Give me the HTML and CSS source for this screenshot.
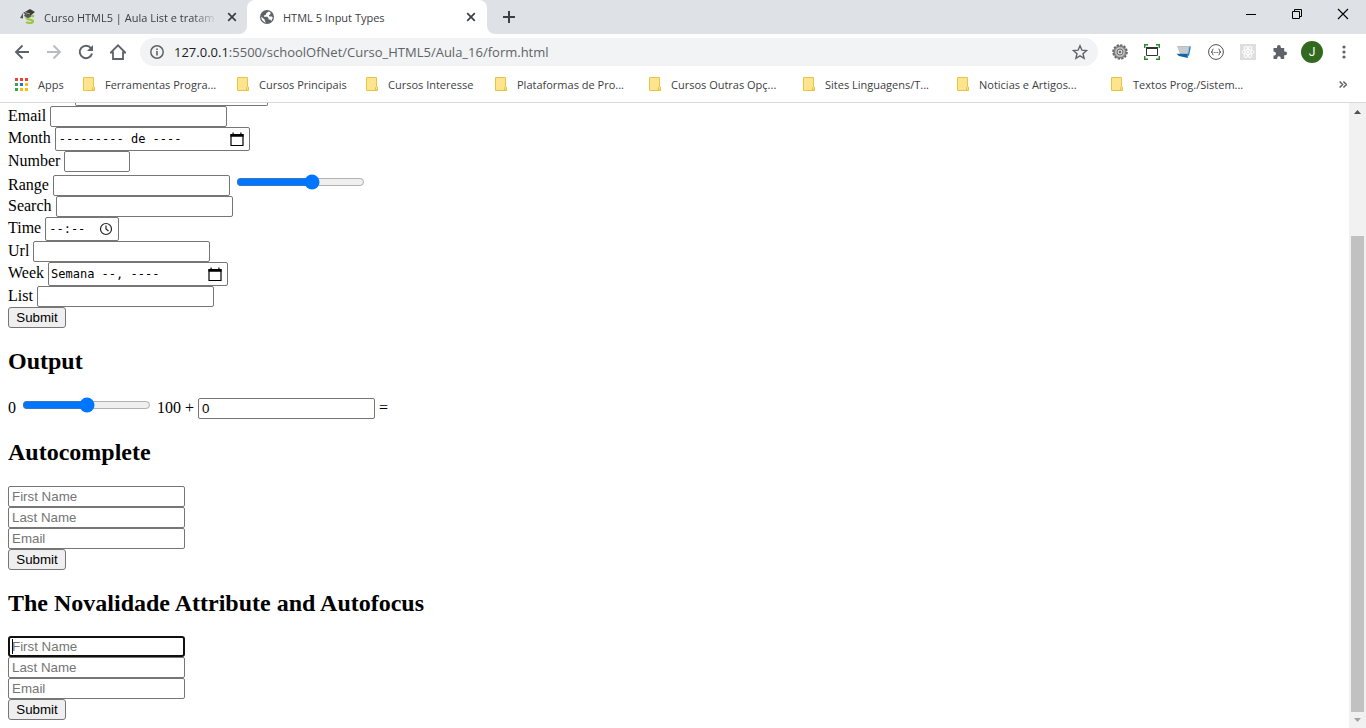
FILE: index.html
```
<!DOCTYPE html>
<html lang="pt-BR">
<head>
<meta charset="utf-8">
<title>HTML 5 Input Types</title>
<link rel="stylesheet" href="styles.css">
</head>
<body>
<svg class="defs" aria-hidden="true">
  <symbol id="folder" viewBox="0 0 12 14"><path d="M.5.5h10v9.500h1v3.500H.5z" fill="#ffe48f" stroke="#e9c441"/><path d="M9.500 13v-2.500l1-1 1 1V13z" fill="#ffe48f" stroke="#e9c441"/></symbol>
  <symbol id="close" viewBox="0 0 10 10"><path d="M1.200 1.200l7.600 7.600M8.800 1.200L1.200 8.800" stroke="#3c4043" stroke-width="1.700" fill="none"/></symbol>
  <symbol id="calendar" viewBox="0 0 14 15"><path d="M1 2.500h12v11H1z" fill="none" stroke="#000" stroke-width="1.200"/><path d="M.5 2h13v2.800H.5zM2.500.5h1.200v2H2.500zM10.300.5h1.200v2h-1.200z"/></symbol>
</svg>

<header class="browser">
  <div class="tabs">
    <div class="tab first">
      <svg class="fav" width="16" height="16" viewBox="0 0 16 16"><path d="M14 7.500C11 6 6.500 6.500 6.500 8.800c0 2.400 6.500 1.200 6.500 3.500 0 2-4.500 2.200-7 .8" fill="none" stroke="#9bc53d" stroke-width="2.200"/><path d="M3 4L10 0l5 3-5 4z" fill="#3b3b3b"/><path d="M5 5l5 1 1 2-3 1-4-2zM3 4L0 9l3 .5z" fill="#555"/><path d="M5 3.500l5 1.500" stroke="#aaa"/></svg>
      <span class="title">Curso HTML5 | Aula List e tratam</span>
      <button class="x" aria-label="Close"><svg width="10" height="10"><use href="#close"/></svg></button>
    </div>
    <div class="tab active">
      <svg class="fav" width="14" height="14" viewBox="0 0 14 14"><circle cx="7" cy="7" r="7" fill="#5f6368"/><path d="M8.500 1.500L6 3.500v1.300L4 5.500v1.300h3.200l1.300 1.300v1.400h1.800L11.500 11l1.300-3.500-1-1H9.500L8.800 5.500 10.500 4V2.200zM1.300 6.500l3.500 3.200v1.200l1.300 1.800A5.900 5.900 0 0 1 1.300 6.500z" fill="#fff"/></svg>
      <span class="title">HTML 5 Input Types</span>
      <button class="x" aria-label="Close"><svg width="10" height="10"><use href="#close"/></svg></button>
    </div>
    <button class="new" aria-label="New tab"><svg width="12" height="12" viewBox="0 0 12 12"><path d="M6 0v12M0 6h12" stroke="#3c4043" stroke-width="2"/></svg></button>
    <div class="window">
      <button aria-label="Minimize"><svg width="12" height="12" viewBox="0 0 12 12"><path d="M1 6.500h10" stroke="#000"/></svg></button>
      <button aria-label="Restore"><svg width="12" height="12" viewBox="0 0 12 12" fill="none" stroke="#000"><path d="M1.500 3.500h7v7h-7zM3.500 3.500v-2h7v7h-2"/></svg></button>
      <button aria-label="Close window"><svg width="12" height="12" viewBox="0 0 12 12"><path d="M1 1l10 10M11 1L1 11" stroke="#000" stroke-width="1.100"/></svg></button>
    </div>
  </div>

  <div class="toolbar">
    <button aria-label="Back"><svg width="16" height="16" viewBox="0 0 16 16" fill="none" stroke="#5f6368" stroke-width="1.900"><path d="M15 8H2.500M8.500 1.500L2 8l6.500 6.500"/></svg></button>
    <button aria-label="Forward"><svg width="16" height="16" viewBox="0 0 16 16" fill="none" stroke="#babcbe" stroke-width="1.900"><path d="M1 8h12.500M7.500 1.500L14 8l-6.500 6.500"/></svg></button>
    <button aria-label="Reload"><svg width="16" height="16" viewBox="0 0 16 16"><path d="M13 4.300A6.200 6.200 0 1 0 14 9.500" fill="none" stroke="#5f6368" stroke-width="2"/><path d="M15 1v6H9z" fill="#5f6368"/></svg></button>
    <button aria-label="Home"><svg width="16" height="16" viewBox="0 0 16 16" fill="none" stroke="#5f6368" stroke-width="1.800"><path d="M.8 8.500H3V15h10V8.500h2.200L8 1.300z"/></svg></button>
    <div class="address">
      <svg width="14" height="14" viewBox="0 0 14 14"><circle cx="7" cy="7" r="6.200" fill="none" stroke="#5f6368" stroke-width="1.500"/><path d="M6.200 6h1.600v4.500H6.200zM6.200 3.500h1.600V5H6.200z" fill="#5f6368"/></svg>
      <span class="url"><b>127.0.0.1</b>:5500/schoolOfNet/Curso_HTML5/Aula_16/form.html</span>
      <button class="star" aria-label="Bookmark"><svg width="16" height="16" viewBox="0 0 16 16"><path d="M8 1.800l1.900 4.400 4.700.4-3.600 3.100 1.100 4.700L8 11.900l-4.100 2.500L5 9.700 1.400 6.600l4.700-.4z" fill="none" stroke="#5f6368" stroke-width="1.400"/></svg></button>
    </div>
    <div class="extensions">
      <svg width="16" height="16" viewBox="0 0 16 16"><circle cx="8" cy="8" r="6.800" fill="#999" stroke="#666" stroke-width="2" stroke-dasharray="2.200 1.360"/><circle cx="8" cy="8" r="5.500" fill="#c4c4c4" stroke="#777"/><circle cx="8" cy="8" r="3" fill="#ddd" stroke="#666"/><circle cx="8" cy="8" r="1.200" fill="#666"/></svg>
      <svg width="16" height="16" viewBox="0 0 16 16" fill="none"><path d="M.7 4V.7H4M12 .7h3.300V4M15.300 12v3.300H12M4 15.300H.7V12" stroke="#2a8a2a" stroke-width="1.400"/><path d="M2.500 4h11v7.500h-11z" stroke="#333"/><path d="M2 4h12" stroke="#333" stroke-width="2"/></svg>
      <svg width="16" height="16" viewBox="0 0 16 16"><path d="M1 2h13l-2.500 8H4z" fill="#b9bdc0"/><path d="M13.500 2.500h1.500L13 12l-4-1.500 3-1z" fill="#2f86d1"/><path d="M.5 9.800l10.800.2L12 14 3 12z" fill="#1263a5"/><path d="M2 4h10M3 6h9M4 8h7" stroke="#d9dbdc"/></svg>
      <svg width="16" height="16" viewBox="0 0 16 16" fill="none" stroke="#505050"><circle cx="8" cy="8" r="7.400"/><path d="M5.500 5q-1.200 0-1 1.500T3 8q1.700.2 1.500 1.500t1 1.500M10.500 5q1.200 0 1 1.500T13 8q-1.700.2-1.500 1.500t-1 1.500M5.800 8.500h1m.7 0h1m.7 0h1"/></svg>
      <svg width="16" height="16" viewBox="0 0 16 16"><path d="M0 0h16v16H0z" fill="#dedede"/><g fill="none" stroke="#fff"><ellipse cx="8" cy="8" rx="6" ry="2.400"/><ellipse cx="8" cy="8" rx="6" ry="2.400" transform="rotate(60 8 8)"/><ellipse cx="8" cy="8" rx="6" ry="2.400" transform="rotate(120 8 8)"/></g><circle cx="8" cy="8" r="1.200" fill="#fff"/></svg>
      <svg width="16" height="16" viewBox="0 0 16 16"><path d="M1.500 4H5V3a1.900 1.900 0 0 1 3.800 0v1h3.400v3.400h1a1.900 1.900 0 0 1 0 3.800h-1V15H8.700v-1a1.700 1.700 0 0 0-3.500 0v1H1.500v-3.500h1a1.900 1.900 0 0 0 0-3.700h-1z" fill="#5f6368"/></svg>
      <button class="avatar">J</button>
      <svg width="16" height="16" viewBox="0 0 16 16" fill="#5f6368"><circle cx="8" cy="3" r="1.600"/><circle cx="8" cy="8" r="1.600"/><circle cx="8" cy="13" r="1.600"/></svg>
    </div>
  </div>

  <nav class="bookmarks">
    <a class="apps" href="#"><svg width="13" height="13" viewBox="0 0 13 13"><path d="M0 0h3v3H0zM5 0h3v3H5zM10 0h3v3h-3z" fill="#ea4335"/><path d="M0 5h3v3H0zM0 10h3v3H0z" fill="#34a853"/><path d="M5 5h3v3H5z" fill="#1a73e8"/><path d="M5 10h3v3H5zM10 5h3v3h-3zM10 10h3v3h-3z" fill="#fbbc04"/></svg>Apps</a>
    <a href="#"><svg width="12" height="14"><use href="#folder"/></svg>Ferramentas Progra...</a>
    <a class="medium" href="#"><svg width="12" height="14"><use href="#folder"/></svg>Cursos Principais</a>
    <a class="medium" href="#"><svg width="12" height="14"><use href="#folder"/></svg>Cursos Interesse</a>
    <a href="#"><svg width="12" height="14"><use href="#folder"/></svg>Plataformas de Pro...</a>
    <a href="#"><svg width="12" height="14"><use href="#folder"/></svg>Cursos Outras Opç...</a>
    <a href="#"><svg width="12" height="14"><use href="#folder"/></svg>Sites Linguagens/T...</a>
    <a href="#"><svg width="12" height="14"><use href="#folder"/></svg>Noticias e Artigos...</a>
    <a href="#"><svg width="12" height="14"><use href="#folder"/></svg>Textos Prog./Sistem...</a>
    <button class="more" aria-label="More bookmarks"><svg width="8" height="7" viewBox="0 0 8 7"><path d="M.6.5l3 3-3 3M4.400.5l3 3-3 3" fill="none" stroke="#5f6368" stroke-width="1.500"/></svg></button>
  </nav>
</header>

<div class="view">
  <main>
    <div class="cut-field"></div>
    <form>
      <div><label for="email">Email</label> <input id="email" type="email"></div>
      <div><label for="month">Month</label> <span class="picker month"><input id="month" type="text" value="--------- de ----"><svg width="14" height="15"><use href="#calendar"/></svg></span></div>
      <div><label for="number">Number</label> <input id="number" class="number" type="number"></div>
      <div><label for="range">Range</label> <input id="range" type="text"> <input type="range" value="60" aria-label="Range"></div>
      <div><label for="search">Search</label> <input id="search" type="text"></div>
      <div><label for="time">Time</label> <span class="picker time"><input id="time" type="text" value="--:--"><svg width="14" height="14" viewBox="0 0 14 14" fill="none" stroke="#222" stroke-width="1.200"><circle cx="7" cy="7" r="5.500"/><path d="M7 3.500V7l2.500 2"/></svg></span></div>
      <div><label for="url">Url</label> <input id="url" type="url"></div>
      <div><label for="week">Week</label> <span class="picker week"><input id="week" type="text" value="Semana --, ----"><svg width="14" height="15"><use href="#calendar"/></svg></span></div>
      <div><label for="list">List</label> <input id="list" type="text"></div>
      <button class="submit" type="button">Submit</button>
    </form>

    <h2>Output</h2>
    <form>0 <input type="range" value="50" aria-label="Value"> 100 + <input type="text" value="0" aria-label="Addend"> =</form>

    <h2>Autocomplete</h2>
    <form class="stack">
      <input type="text" placeholder="First Name">
      <input type="text" placeholder="Last Name">
      <input type="email" placeholder="Email">
      <button class="submit" type="button">Submit</button>
    </form>

    <h2>The Novalidade Attribute and Autofocus</h2>
    <form class="stack" novalidate>
      <input class="focused" type="text" placeholder="First Name">
      <input type="text" placeholder="Last Name">
      <input type="email" placeholder="Email">
      <button class="submit" type="button">Submit</button>
    </form>
  </main>
  <div class="scrollbar">
    <svg width="7" height="4" viewBox="0 0 7 4"><path d="M0 4h7L3.500 0z" fill="#505050"/></svg>
    <div class="thumb"></div>
    <svg width="7" height="4" viewBox="0 0 7 4"><path d="M0 0h7L3.500 4z" fill="#a3a3a3"/></svg>
  </div>
</div>
</body>
</html>
```
FILE: styles.css
```
* { box-sizing: border-box; }
body {
  margin: 0;
  height: 100vh;
  display: flex;
  flex-direction: column;
  overflow: hidden;
  background: #fff;
  color: #000;
  font: 16px "Liberation Serif", serif;
}
.defs { display: none; }

.browser { flex: none; color: #3c4043; font: 11px "Open Sans", sans-serif; border-bottom: 1px solid #d9d9db; }
.browser button { display: flex; align-items: center; justify-content: center; padding: 0; border: 0; background: none; }
.browser svg { flex: none; }

.tabs { display: flex; height: 34px; background: #fff; }
.tab { display: flex; align-items: center; width: 240px; padding: 0 10px 0 13px; }
.tab.first { width: 247px; padding: 0 9px 0 20px; border-radius: 0 0 8px 0; background: #dee1e6; }
.tab.active { border-radius: 8px 8px 0 0; background: #fff; box-shadow: 0 -8px 0 8px #dee1e6; clip-path: inset(0); }
.tab .title { flex: 1; overflow: hidden; margin: 0 8px; white-space: nowrap; }
.tab.active .title { margin-left: 9px; }
.tab.first .title { -webkit-mask-image: linear-gradient(to right, #000 85%, transparent); mask-image: linear-gradient(to right, #000 85%, transparent); }
.tab .x { width: 12px; height: 16px; }
.new { width: 44px; }
.browser .new { border-radius: 0 0 0 8px; background: #dee1e6; }
.window { flex: 1; display: flex; align-items: flex-start; justify-content: flex-end; background: #dee1e6; }
.window button { width: 46px; height: 28px; }

.toolbar { display: flex; align-items: center; height: 36px; padding: 0 14px 0 6px; }
.toolbar > button { width: 32px; height: 32px; }
.address { flex: 1; display: flex; align-items: center; height: 28px; margin: 0 14px 0 6px; padding: 0 10px; border-radius: 14px; background: #f1f3f4; }
.url { flex: 1; margin-left: 10px; color: #5f6368; font-size: 13px; }
.url b { color: #202124; font-weight: 400; }
.extensions { display: flex; align-items: center; gap: 16px; }
.extensions .avatar { width: 22px; height: 22px; margin: 0 -3px; border-radius: 50%; background: #33691e; color: #fff; font: 12px Roboto, sans-serif; }

.bookmarks { display: flex; align-items: center; height: 32px; padding: 0 19px 4px 15px; }
.bookmarks a { flex: none; display: flex; align-items: center; gap: 10px; width: 154px; color: inherit; text-decoration: none; white-space: nowrap; }
.bookmarks .apps { width: 68px; }
.bookmarks .medium { width: 129px; }
.bookmarks .more { margin-left: auto; }

.view { flex: 1; min-height: 0; display: flex; }
main { flex: 1; padding: 0 8px; }
.cut-field { width: 193px; height: 3px; margin-left: 67px; border: solid #767676; border-width: 0 1px 1px; border-radius: 0 0 2px 2px; }
main input, .submit { font-family: "Liberation Sans", Arial, sans-serif; }
main input:not([type="range"]) { width: 177px; height: 21px; padding: 1px 3px; border: 1px solid #767676; border-radius: 2px; }
main input.number { width: 66px; }
.picker { display: inline-flex; align-items: center; height: 24px; padding: 0 5px 0 3px; border: 1px solid #767676; border-radius: 2px; vertical-align: middle; }
main .picker input:not([type="range"]) { flex: 1; min-width: 0; width: 100%; padding: 0; border: 0; background: none; font: 12px "DejaVu Sans Mono", monospace; }
.month { width: 195px; }
.time { width: 74px; }
.week { width: 180px; }
.picker.week { padding-left: 2px; }
.submit { display: block; width: 58px; height: 21px; padding: 0; border: 1px solid #767676; border-radius: 3px; background: #efefef; color: #000; }
.stack input { display: block; }
main .stack input.focused { padding: 0 2px; border: 2px solid #101010; border-radius: 3px; background: linear-gradient(#000, #000) 2px 1px / 1px 15px no-repeat; }
h2 { font-size: 24px; }

.scrollbar { display: flex; flex-direction: column; align-items: center; width: 17px; padding: 7px 0 6px; background: #f1f1f1; }
.thumb { flex: 1; width: 13px; margin: 122px 0 6px; background: #c1c1c1; }
```
